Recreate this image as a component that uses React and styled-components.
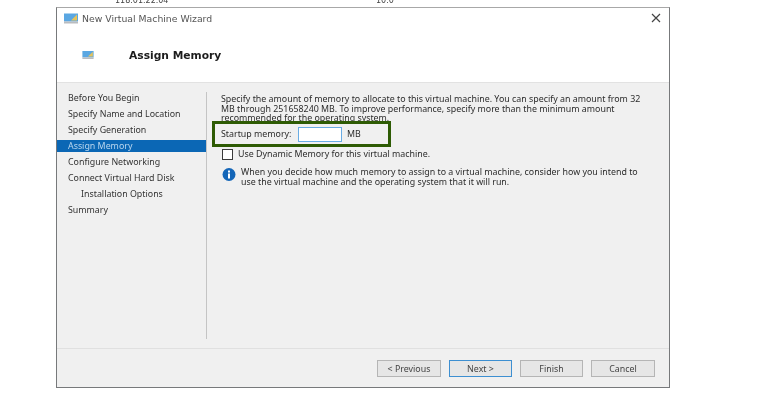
import React from 'react';
import styled, { createGlobalStyle } from 'styled-components';

const GlobalStyle = createGlobalStyle`
  html, body {
    margin: 0;
    padding: 0;
    background: #fff;
  }
  body {
    font-family: "Noto Sans", sans-serif;
    font-size: 8.85px;
    color: #2c2c2c;
  }
`;

const Page = styled.div`
  width: 783px;
  height: 408px;
  overflow: hidden;
  filter: blur(0.35px);
`;

const ClippedRow = styled.div`
  height: 7px;
  overflow: hidden;
  display: flex;
  padding-left: 115px;
  font-family: "DejaVu Sans", sans-serif;
  font-size: 8px;
  line-height: 1px;
  color: #444;
`;

const ClippedCell = styled.span`
  width: ${({ $width }) => $width}px;
`;

const Window = styled.div`
  width: 612px;
  height: 379px;
  margin-left: 56px;
  display: flex;
  flex-direction: column;
  background: #fff;
  border: 1px solid #77797b;
  border-top-color: #a8a8a8;
`;

const TitleBar = styled.div`
  height: 20px;
  flex: none;
  display: flex;
  align-items: center;
  padding: 0 8px 0 7px;
  gap: 4px;
  color: #555;
`;

const TitleText = styled.span`
  flex: 1;
  font-family: "DejaVu Sans", sans-serif;
  font-size: 9.3px;
`;

const HeaderBand = styled.div`
  height: 54px;
  flex: none;
  display: flex;
  align-items: center;
  padding-left: 24px;
  gap: 34px;
`;

const HeaderTitle = styled.h1`
  margin: 0;
  font-family: "DejaVu Sans", sans-serif;
  font-size: 10.7px;
  font-weight: 700;
  color: #1c1c1c;
`;

const Body = styled.div`
  flex: 1;
  display: flex;
  background: #f0f0f0;
  border-top: 1px solid #e2e2e2;
`;

const Nav = styled.div`
  width: 149px;
  flex: none;
  padding-top: 9px;
  display: flex;
  flex-direction: column;
`;

const NavItem = styled.div`
  height: 12px;
  margin-bottom: 3.95px;
  line-height: 12px;
  padding-left: ${({ $indent }) => ($indent ? 24 : 11)}px;
  background: ${({ $active }) => ($active ? '#0b67b5' : 'transparent')};
  color: ${({ $active }) => ($active ? '#b9d6ee' : '#333')};
`;

const Divider = styled.div`
  width: 1px;
  flex: none;
  margin: 9px 0;
  background: #c4c4c4;
`;

const Content = styled.div`
  flex: 1;
  padding: 12px 16px 0 14px;
  display: flex;
  flex-direction: column;
`;

const Intro = styled.p`
  margin: 0;
  height: 26px;
  line-height: 9.5px;
`;

const MemoryBox = styled.div`
  width: 179px;
  height: 26px;
  box-sizing: border-box;
  margin-left: -9px;
  padding-left: 6px;
  flex: none;
  display: flex;
  align-items: center;
  background: #f0f0f0;
  border: 3px solid #2e5b04;
`;

const MemoryLabel = styled.label`
  width: 77px;
  flex: none;
`;

const MemoryInput = styled.div`
  width: 42px;
  height: 13px;
  flex: none;
  margin-right: 5px;
  background: #fff;
  border: 1px solid #69ace4;
`;

const CheckRow = styled.div`
  margin-top: 1.5px;
  margin-left: 1px;
  display: flex;
  align-items: center;
  gap: 5px;
  height: 11px;
`;

const CheckBox = styled.span`
  width: 9px;
  height: 9px;
  background: #fff;
  border: 1px solid #3a3a3a;
`;

const InfoRow = styled.div`
  margin-top: 8.5px;
  margin-left: 1px;
  display: flex;
  gap: 5px;
`;

const InfoText = styled.p`
  margin: 0;
  line-height: 9.5px;
`;

const Footer = styled.div`
  height: 39px;
  flex: none;
  display: flex;
  justify-content: flex-end;
  gap: 8px;
  padding: 11px 14px 0 0;
  box-sizing: border-box;
  background: #f0f0f0;
  border-top: 1px solid #e0e0e0;
`;

const Button = styled.div`
  width: ${({ $width }) => $width || 63}px;
  height: 17px;
  box-sizing: border-box;
  display: flex;
  align-items: center;
  justify-content: center;
  background: #e6e6e6;
  color: #444;
  border: ${({ $primary }) => ($primary ? '1.5px solid #3d8fd1' : '1px solid #b5b5b5')};
`;

const VmIcon = ({ width, height }) => (
  <svg width={width} height={height} viewBox="0 0 14 10" style={{ flex: 'none' }}>
    <rect x="0" y="0" width="14" height="8" fill="#5aa7e2" />
    <path d="M7 7 L13 1 L13 7 Z" fill="#e6c35c" />
    <rect x="0" y="8" width="14" height="2" fill="#b9bcbf" />
  </svg>
);

const CloseIcon = () => (
  <svg width="10" height="10" viewBox="0 0 10 10" style={{ flex: 'none' }}>
    <path d="M1 1 L9 9 M9 1 L1 9" stroke="#444" strokeWidth="1.2" />
  </svg>
);

const InfoIcon = () => (
  <svg width="14" height="13" viewBox="0 0 14 13" style={{ flex: 'none' }}>
    <circle cx="7" cy="6.5" r="6.5" fill="#1466b8" />
    <rect x="6" y="5.5" width="2" height="5" fill="#fff" />
    <rect x="6" y="2.5" width="2" height="2" fill="#fff" />
  </svg>
);

const steps = [
  { label: 'Before You Begin' },
  { label: 'Specify Name and Location' },
  { label: 'Specify Generation' },
  { label: 'Assign Memory', active: true },
  { label: 'Configure Networking' },
  { label: 'Connect Virtual Hard Disk' },
  { label: 'Installation Options', indent: true },
  { label: 'Summary' },
];

const App = () => {
  return (
    <Page>
      <GlobalStyle />
      <ClippedRow>
        <ClippedCell $width={261}>118.01.22.04</ClippedCell>
        <ClippedCell $width={40}>10.0</ClippedCell>
      </ClippedRow>
      <Window>
        <TitleBar>
          <VmIcon width={14} height={11} />
          <TitleText>New Virtual Machine Wizard</TitleText>
          <CloseIcon />
        </TitleBar>
        <HeaderBand>
          <VmIcon width={14} height={8} />
          <HeaderTitle>Assign Memory</HeaderTitle>
        </HeaderBand>
        <Body>
          <Nav>
            {steps.map((step) => (
              <NavItem key={step.label} $active={step.active} $indent={step.indent}>
                {step.label}
              </NavItem>
            ))}
          </Nav>
          <Divider />
          <Content>
            <Intro>
              Specify the amount of memory to allocate to this virtual machine. You can specify an amount from 32
              MB through 251658240 MB. To improve performance, specify more than the minimum amount
              recommended for the operating system.
            </Intro>
            <MemoryBox>
              <MemoryLabel>Startup memory:</MemoryLabel>
              <MemoryInput />
              MB
            </MemoryBox>
            <CheckRow>
              <CheckBox />
              Use Dynamic Memory for this virtual machine.
            </CheckRow>
            <InfoRow>
              <InfoIcon />
              <InfoText>
                When you decide how much memory to assign to a virtual machine, consider how you intend to
                use the virtual machine and the operating system that it will run.
              </InfoText>
            </InfoRow>
          </Content>
        </Body>
        <Footer>
          <Button $width={64}>&lt; Previous</Button>
          <Button $primary>Next &gt;</Button>
          <Button>Finish</Button>
          <Button $width={64}>Cancel</Button>
        </Footer>
      </Window>
    </Page>
  );
};

export default App;
